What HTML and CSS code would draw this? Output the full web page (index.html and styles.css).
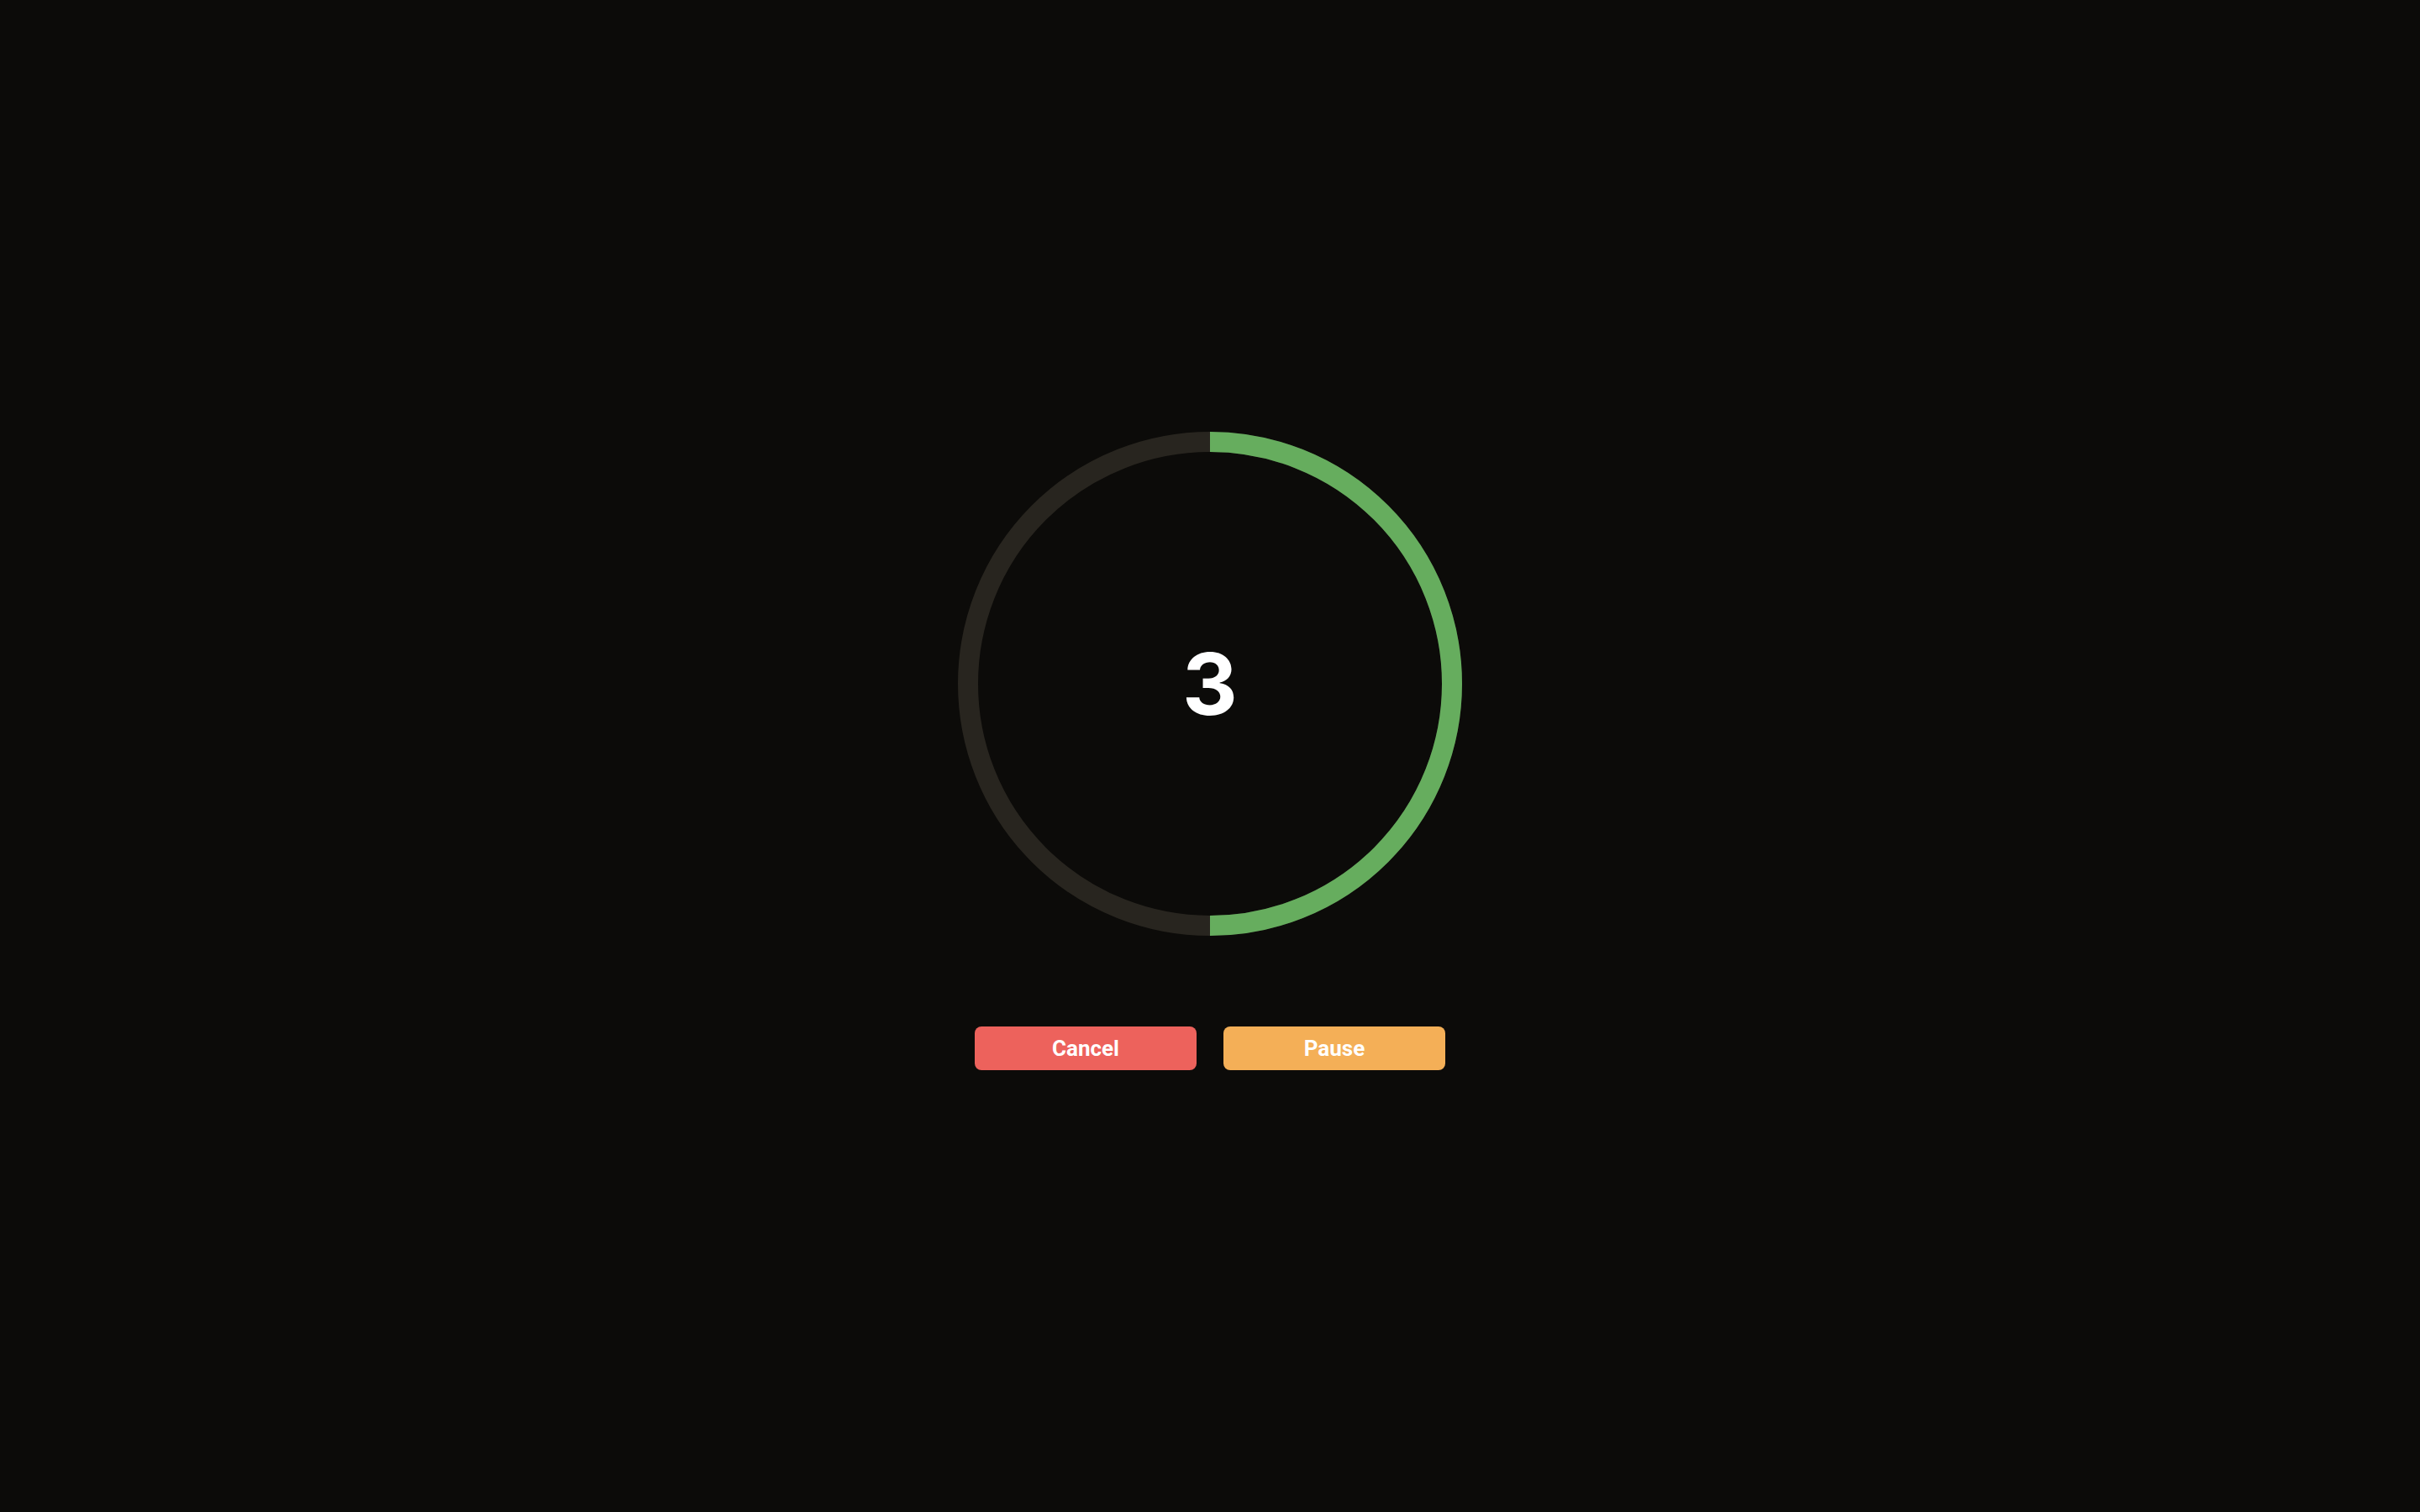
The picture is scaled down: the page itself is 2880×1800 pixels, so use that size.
FILE: index.html
```html
<!DOCTYPE html>
<html lang="en">
<head>
<meta charset="utf-8">
<title>Countdown</title>
<link rel="stylesheet" href="styles.css">
</head>
<body>
<main class="screen">
  <div class="timer">
    <svg class="ring" width="600" height="600" viewBox="0 0 600 600">
      <circle class="ring-track" cx="300" cy="300" r="288"/>
      <path class="ring-progress" d="M300 12 A288 288 0 0 1 300 588"/>
    </svg>
    <div class="count">3</div>
  </div>
  <div class="actions">
    <button class="btn btn-cancel">Cancel</button>
    <button class="btn btn-pause">Pause</button>
  </div>
</main>
</body>
</html>
```
FILE: styles.css
```css
html, body {
  margin: 0;
  padding: 0;
  background: #0c0b09;
}
body {
  font-family: Inter, "Noto Sans", sans-serif;
}
.screen {
  width: 2880px;
  height: 1800px;
  display: flex;
  flex-direction: column;
  align-items: center;
  justify-content: center;
  padding-bottom: 12px;
  box-sizing: border-box;
}
.timer {
  position: relative;
  width: 600px;
  height: 600px;
}
.ring {
  display: block;
}
.ring-track {
  fill: none;
  stroke: #28251f;
  stroke-width: 24;
}
.ring-progress {
  fill: none;
  stroke: #66ad5e;
  stroke-width: 24;
}
.count {
  position: absolute;
  inset: 0;
  display: flex;
  align-items: center;
  justify-content: center;
  color: #ffffff;
  font-family: Inter, sans-serif;
  font-weight: 700;
  font-size: 102px;
  line-height: 1;
}
.actions {
  display: flex;
  gap: 32px;
  margin-top: 108px;
}
.btn {
  width: 264px;
  height: 52px;
  border: none;
  border-radius: 8px;
  color: #ffffff;
  font-family: Roboto, Inter, sans-serif;
  font-weight: 700;
  font-size: 26px;
  padding: 0;
}
.btn-cancel {
  background: #ed625c;
}
.btn-pause {
  background: #f4af57;
}
```
